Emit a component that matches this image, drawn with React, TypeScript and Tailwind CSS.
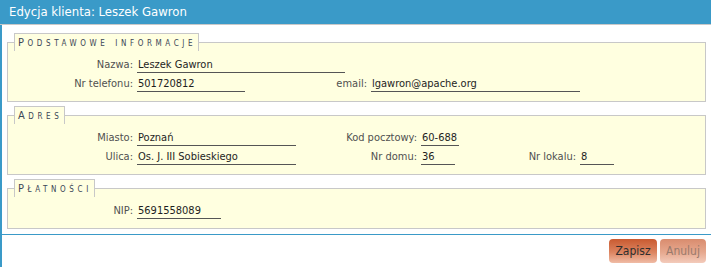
import React from "react";

const font = { fontFamily: '"DejaVu Sans Condensed", "DejaVu Sans", sans-serif' };

function Label({ w, children }: { w: string; children: React.ReactNode }) {
  return (
    <span className={`${w} shrink-0 text-right text-[#505050] leading-[14px] mb-[1px] whitespace-nowrap`}>
      {children}
    </span>
  );
}

function Value({ w, children }: { w: string; children: React.ReactNode }) {
  return (
    <span className={`${w} shrink-0 ml-[4px] pl-[1px] text-[#1e1e1e] leading-[14px] border-b border-[#555555] whitespace-nowrap`}>
      {children}
    </span>
  );
}

function Row({ children }: { children: React.ReactNode }) {
  return <div className="flex items-end h-[19px]">{children}</div>;
}

function Box({ title, children }: { title: string; children: React.ReactNode }) {
  return (
    <fieldset className="m-0 min-w-0 border border-[#c8c8c8] bg-[#ffffe0] px-0 pt-[3px] pb-[9px]">
      <legend className="ml-[6px] border-t border-l border-r border-[#c8c8c8] bg-[#ffffe0] pl-[3px] pr-[2px] leading-[17px] text-[11px] text-[#3b4656] tracking-[3.6px] [font-variant:small-caps]">
        {title}
      </legend>
      {children}
    </fieldset>
  );
}

export default function App() {
  return (
    <div className="w-[711px] h-[267px] bg-white border-l-2 border-[#3a9ac8] flex flex-col text-[11px]" style={font}>
      <div className="box-content h-[24px] -ml-[2px] pl-[9px] bg-[#3a9ac8] border-b border-[#c8c8c8] text-white text-[13px] leading-[24px]">
        Edycja klienta: Leszek Gawron
      </div>
      <div className="px-[5px] pt-[8px] flex flex-col gap-[4px]">
        <Box title="Podstawowe informacje">
          <Row>
            <Label w="w-[125px]">Nazwa:</Label>
            <Value w="w-[208px]">Leszek Gawron</Value>
          </Row>
          <Row>
            <Label w="w-[125px]">Nr telefonu:</Label>
            <Value w="w-[108px]">501720812</Value>
            <Label w="w-[122px]">email:</Label>
            <Value w="w-[209px]">lgawron@apache.org</Value>
          </Row>
        </Box>
        <Box title="Adres">
          <Row>
            <Label w="w-[125px]">Miasto:</Label>
            <Value w="w-[159px]">Poznań</Value>
            <Label w="w-[121px]">Kod pocztowy:</Label>
            <Value w="w-[38px]">60-688</Value>
          </Row>
          <Row>
            <Label w="w-[125px]">Ulica:</Label>
            <Value w="w-[159px]">Os. J. III Sobieskiego</Value>
            <Label w="w-[121px]">Nr domu:</Label>
            <Value w="w-[34px]">36</Value>
            <Label w="w-[121px]">Nr lokalu:</Label>
            <Value w="w-[34px]">8</Value>
          </Row>
        </Box>
        <Box title="Płatności">
          <Row>
            <Label w="w-[125px]">NIP:</Label>
            <Value w="w-[84px]">5691558089</Value>
          </Row>
        </Box>
      </div>
      <div className="mt-[5px] border-t border-[#3a9ac8] flex justify-end gap-[3px] pt-[4px] pr-[5px]">
        <button className="w-[48px] h-[24px] rounded-[4px] bg-[linear-gradient(to_bottom,#c95a30,#dc8460_55%,#f0bca6)] text-[12px] text-[#2e2e2e] leading-[24px]">
          Zapisz
        </button>
        <button className="w-[46px] h-[24px] rounded-[4px] bg-[linear-gradient(to_bottom,#d98c6e,#e6a88e_55%,#f3cbbb)] text-[12px] text-[#9a7a6c] leading-[24px]">
          Anuluj
        </button>
      </div>
    </div>
  );
}
